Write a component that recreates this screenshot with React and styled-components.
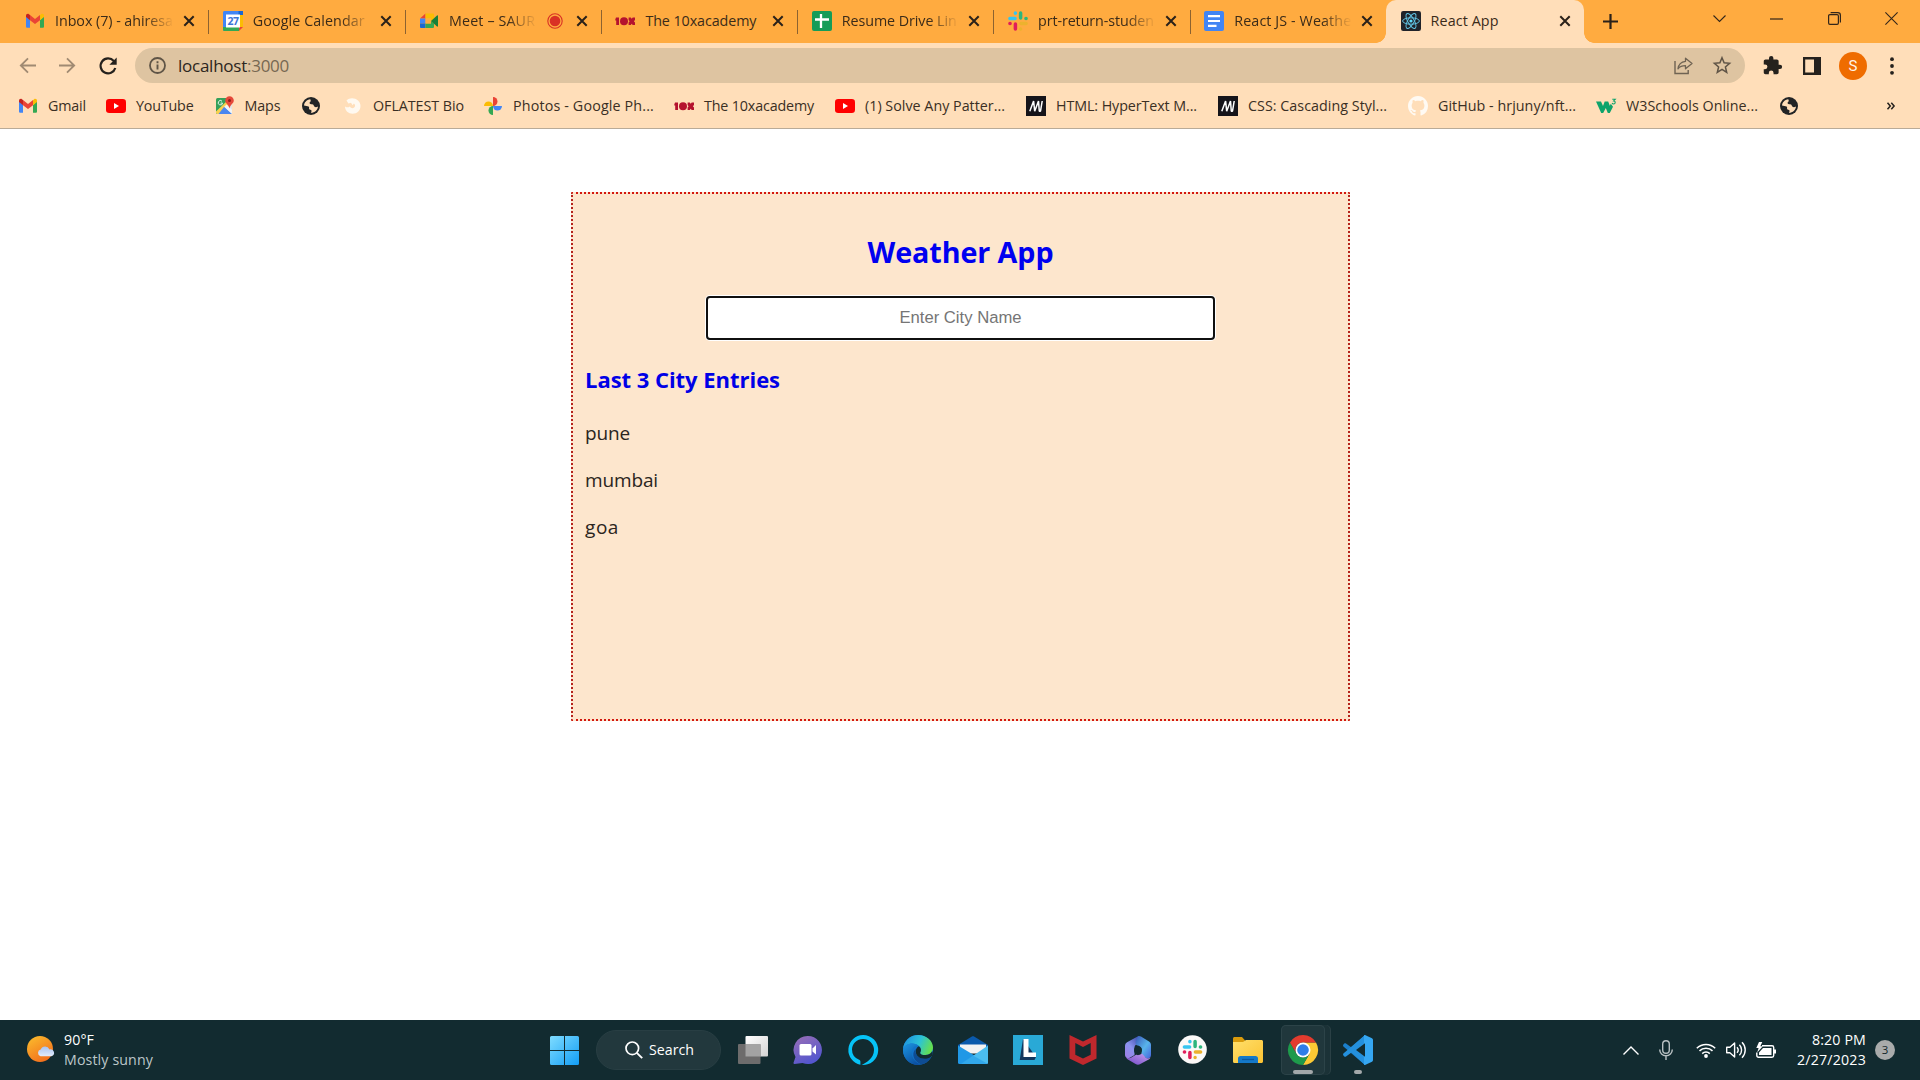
import React, { useLayoutEffect, useRef, useState } from "react";
import styled, { createGlobalStyle, css } from "styled-components";

const Global = createGlobalStyle`
  *, *::before, *::after { box-sizing: border-box; }
  html, body { margin: 0; padding: 0; }
  body { width: 1920px; height: 1080px; overflow: hidden; background: #fff; font-family: "Open Sans", "Noto Sans", sans-serif; }
  svg { display: block; flex: none; overflow: visible; }
  h1, h2, p { margin: 0; }
`;

/* ---------- text whose tracking adapts to a given run width ---------- */
const Run = styled.span`
  display: inline-block;
  white-space: nowrap;
  flex: none;
`;

function Fit({ w, children }) {
  const ref = useRef(null);
  const [spacing, setSpacing] = useState(0);
  useLayoutEffect(() => {
    const natural = ref.current.getBoundingClientRect().width;
    setSpacing((w - natural) / Math.max(1, children.length));
  }, [w, children]);
  return (
    <Run ref={ref} style={{ letterSpacing: spacing }}>
      {children}
    </Run>
  );
}

/* ---------- icons ---------- */
const Svg = ({ s = 20, h, box = "0 0 20 20", children, ...rest }) => (
  <svg width={s} height={h || s} viewBox={box} fill="none" {...rest}>
    {children}
  </svg>
);

const GmailIcon = () => (
  <Svg>
    <path d="M1 5.2v10.3c0 .8.6 1.3 1.3 1.3H5V9L1 5.2z" fill="#4285f4" />
    <path d="M15 9v7.8h2.7c.8 0 1.3-.6 1.3-1.3V5.2L15 9z" fill="#34a853" />
    <path d="M15 4.200V9.200l4-3.200V4.600c0-1.500-1.700-2.300-2.900-1.400L15 4.200z" fill="#fbbc04" />
    <path d="M5 9.200V4.100l5 3.900 5-3.900v5.100l-5 3.800-5-3.800z" fill="#ea4335" />
    <path d="M1 4.600V6l4 3.200V4.100L3.900 3.200C2.700 2.300 1 3.100 1 4.600z" fill="#c5221f" />
  </Svg>
);
const YouTubeIcon = () => (
  <Svg>
    <rect x="0" y="3" width="20" height="14" rx="3.2" fill="#f00" />
    <path d="M8 7.100v5.800l5-2.900-5-2.900z" fill="#fff" />
  </Svg>
);
const MapsIcon = () => (
  <Svg>
    <rect x="1" y="2" width="16" height="16" rx="1.5" fill="#34a05a" />
    <path d="M2 18 17 4v12.500c0 .8-.7 1.500-1.500 1.500z" fill="#dfe3e6" />
    <path d="M9 11l8 7H3l6-7z" fill="#4a86f0" />
    <path d="M1 15.500 14 3l2.500 2.500L4 18H2.500C1.700 18 1 17.300 1 16.500z" fill="#f9d04f" />
    <path d="M9.200 10.800 17 18H3.500l5.700-7.200z" fill="#4a86f0" />
    <path d="M9.200 10.800 11.500 8.600 17 13.800V18l-7.800-7.200z" fill="#f1f3f4" />
    <path d="M7 5.200a2.200 2.200 0 1 0 .6 1.900H5.600" stroke="#e8f5ec" strokeWidth="1" />
    <path d="M14.500.2a4.300 4.300 0 0 0-4.300 4.300c0 2.800 3.600 4.200 4.300 8 .7-3.800 4.300-5.200 4.300-8A4.300 4.300 0 0 0 14.500.2z" fill="#e5483a" />
    <circle cx="14.5" cy="4.5" r="1.5" fill="#8d1f17" />
  </Svg>
);
const GlobeIcon = () => (
  <Svg>
    <circle cx="10" cy="10" r="9" fill="#222426" />
    <path d="M9.200 3.200c-3.400.4-6 3.200-6.200 6.300 1.600.6 3.300.3 4.600 1.100 1.200.8-.2 2 .9 2.800 1.100.7 2.100.2 2 1.500 0 .8-.2 1.400-.5 2 3.800-.2 6.700-3 7-6.400-1.300.9-2.800.9-3.700.1-.8-.8-.2-1.800-1.300-2.200-1.300-.4-2.600.2-3.300-.8-.7-1.200.8-1.500 1-2.600.1-.7-.1-1.300-.5-1.800z" fill="#ffdeb9" />
  </Svg>
);
const FlareIcon = () => (
  <Svg>
    <path d="M3.500 4.500C6.500 1.600 11.700 1.700 15 4.600c3.300 3 3.300 8 .3 11-3 2.900-8.300 2.900-11.100.2C2.600 14 2.100 12.300 2 10.400c2 1.300 3.400 1.200 4.800.1 1.200 2 3.200 2 4.400 1 1.300-1.200 1.200-3-.3-4L9.600 9.200 8 6.800 5.400 7.400 3.500 4.500z" fill="#fff9f0" />
  </Svg>
);
const PhotosIcon = () => (
  <Svg>
    <path d="M10 10V1a4.500 4.500 0 0 1 0 9z" fill="#ea4335" />
    <path d="M10 10h9a4.500 4.500 0 0 1-9 0z" fill="#4285f4" />
    <path d="M10 10v9a4.500 4.500 0 0 1 0-9z" fill="#34a853" />
    <path d="M10 10H1a4.500 4.500 0 0 1 9 0z" fill="#fbbc04" />
  </Svg>
);
const TenXIcon = () => (
  <Svg>
    <path d="M.3 8.500 1 6.500h3V14H1.200V9.400H.3z" fill="#b5122e" />
    <circle cx="9" cy="10.200" r="4" fill="#b5122e" />
    <path d="M13.600 6.500h2.200l.9 1.200 1-1.200h2.300v2.400l-1.100 1.300 1.100 1.300V14h-2.300l-1-1.200-.9 1.200h-2.200v-2.500l1-1.300-1-1.300z" fill="#b5122e" />
  </Svg>
);
const MdnIcon = () => (
  <Svg>
    <rect width="20" height="20" fill="#15141a" />
    <path d="M3.800 15.200 7.600 5l1.100 10.200L12.500 5l.8 10.200h1.200L16.200 5" stroke="#fff" strokeWidth="1.5" strokeLinejoin="bevel" />
  </Svg>
);
const GitHubIcon = () => (
  <Svg s={20} box="0 0 16 16">
    <path fill="#fffaf3" d="M8 0C3.580 0 0 3.580 0 8c0 3.540 2.290 6.530 5.470 7.590.4.070.55-.17.55-.38 0-.19-.01-.82-.01-1.490-2.010.37-2.530-.49-2.690-.94-.09-.23-.48-.94-.82-1.130-.28-.15-.68-.52-.01-.53.630-.010 1.080.580 1.230.820.720 1.210 1.870.870 2.330.660.070-.520.280-.870.510-1.070-1.780-.200-3.640-.890-3.640-3.950 0-.870.310-1.590.820-2.150-.080-.200-.360-1.020.080-2.120 0 0 .670-.210 2.200.820.640-.180 1.320-.270 2-.270s1.360.090 2 .270c1.530-1.040 2.200-.820 2.200-.820.440 1.100.160 1.920.080 2.120.510.560.820 1.270.820 2.150 0 3.070-1.870 3.750-3.650 3.950.290.250.540.730.540 1.480 0 1.070-.010 1.930-.010 2.200 0 .210.150.460.550.380A8.010 8.010 0 0 0 16 8c0-4.420-3.580-8-8-8z" />
  </Svg>
);
const W3Icon = () => (
  <Svg>
    <path d="M0 5.500h5l2 4.500 1.700-4.500h3.500l1.600 4.200 1-2 2.200 3L13.800 17h-2l-2-5-2.600 5h-2z" fill="#0fa36b" />
    <path d="M16.300 3.200h3L17.700 5c2 0 2 3-.1 3-.9 0-1.300-.4-1.500-1" stroke="#0fa36b" strokeWidth="1.1" />
  </Svg>
);
const CalendarIcon = () => (
  <Svg>
    <path d="M0 1.500C0 .7.7 0 1.500 0H20v4H4v12L2.500 20H1.500A1.500 1.500 0 0 1 0 18.500z" fill="#4285f4" />
    <path d="M15.500 0H20v4h-4.500z" fill="#1967d2" />
    <path d="M16 4h4v12h-4z" fill="#fbbc04" />
    <path d="M0 16h16v4H1.500A1.500 1.500 0 0 1 0 18.500z" fill="#34a853" />
    <path d="M16 20v-4h4z" fill="#ea4335" />
    <rect x="3" y="3.5" width="14" height="13" fill="#fff" />
    <text x="10" y="14" textAnchor="middle" fontFamily="Open Sans, sans-serif" fontSize="10.5" fontWeight="700" letterSpacing="-.5" fill="#3b74d8">27</text>
  </Svg>
);
const MeetIcon = () => (
  <Svg>
    <path d="M1 7.500 6.500 2.500V7.500z" fill="#ea4335" />
    <path d="M6.500 2.500h7.200c.8 0 1.300.5 1.300 1.300V8l-3 2V7.500H6.500z" fill="#fbbc04" />
    <path d="M1 7.500h5.500v5H1z" fill="#4285f4" />
    <path d="M1 12.500h5.500V17H2.300C1.500 17 1 16.500 1 15.700z" fill="#1967d2" />
    <path d="M6.500 12.500H12V10l3 2.500v3.200c0 .8-.5 1.300-1.300 1.300H6.500z" fill="#34a853" />
    <path d="M6.500 7.500H12v5H6.500z" fill="#ffab40" />
    <path d="M12 10l6-5.500c.4-.3 1-.1 1 .5v10c0 .6-.6.8-1 .5z" fill="#188038" />
  </Svg>
);
const RecordIcon = () => (
  <Svg s={16} box="0 0 16 16">
    <circle cx="8" cy="8" r="7.2" stroke="#d93025" strokeWidth="1.1" />
    <circle cx="8" cy="8" r="5.3" fill="#d93025" />
  </Svg>
);
const SheetsIcon = () => (
  <Svg>
    <rect width="20" height="20" rx="2" fill="#159c58" />
    <path d="M9 3v14M3 8.500h14" stroke="#fff" strokeWidth="2.3" />
  </Svg>
);
const SlackMark = () => (
  <g>
    <path d="M1.900 7.400h5.200M7.400 2v.3" stroke="#36c5f0" strokeWidth="3.500" strokeLinecap="round" />
    <path d="M12.600 1.900v5.200M17.900 7.400h.2" stroke="#2eb67d" strokeWidth="3.500" strokeLinecap="round" />
    <path d="M12.900 12.600h5.200M12.600 17.900v.2" stroke="#ecb22e" strokeWidth="3.500" strokeLinecap="round" />
    <path d="M7.400 12.900v5.200M1.900 12.600h.2" stroke="#e01e5a" strokeWidth="3.500" strokeLinecap="round" />
  </g>
);
const SlackIcon = () => <Svg><SlackMark /></Svg>;
const DocsIcon = () => (
  <Svg>
    <rect width="20" height="20" rx="2" fill="#4285f4" />
    <path d="M4 5.200h12M4 10h12M4 14.800h8.500" stroke="#fff" strokeWidth="2.2" />
  </Svg>
);
const ReactIcon = () => (
  <Svg>
    <rect width="20" height="20" rx="2.2" fill="#20232a" />
    <g stroke="#61c5e6" strokeWidth=".95">
      <ellipse cx="10" cy="10" rx="8.4" ry="3.2" />
      <ellipse cx="10" cy="10" rx="8.4" ry="3.2" transform="rotate(60 10 10)" />
      <ellipse cx="10" cy="10" rx="8.4" ry="3.2" transform="rotate(120 10 10)" />
    </g>
    <circle cx="10" cy="10" r="1.6" fill="#61dafb" />
  </Svg>
);
const CloseIcon = () => (
  <Svg s={10} box="0 0 10 10">
    <path d="M.3.3l9.400 9.400M9.700.3.3 9.700" stroke="#2a2119" strokeWidth="2" />
  </Svg>
);

/* ---------- tab strip ---------- */
const Screen = styled.div`
  width: 1920px;
  height: 1080px;
  display: flex;
  flex-direction: column;
  background: #fff;
`;
const TabStrip = styled.header`
  height: 43px;
  display: flex;
  background: #ffab40;
  padding-left: 10.5px;
`;
const Tab = styled.div`
  width: ${(p) => p.$w || 196.3}px;
  height: 43px;
  flex: none;
  display: flex;
  align-items: center;
  padding: 0 14px 1px 14.5px;
  font-size: 14.3px;
  line-height: 20px;
  color: #3b2b19;
  ${(p) =>
    p.$divided &&
    css`
      background: linear-gradient(#8c6230, #8c6230) left 0 top 10px / 1px 24px no-repeat;
    `}
  ${(p) =>
    p.$active &&
    css`
      background: #ffdeb9;
      border-radius: 10px 10px 0 0;
    `}
`;
const TabTitle = styled.div`
  flex: 1;
  min-width: 0;
  margin: 0 10px;
  overflow: hidden;
  height: 20px;
  position: relative;
  top: -0.5px;
  ${(p) =>
    p.$fade &&
    css`
      mask-image: linear-gradient(90deg, #000 calc(100% - 30px), transparent);
    `}
`;
const TabEnd = styled.div`
  display: flex;
  align-items: center;
  gap: 14px;
`;
const Flare = styled.span`
  width: 10px;
  height: 10px;
  flex: none;
  align-self: flex-end;
  margin-left: ${(p) => (p.$side === "left" ? "-10px" : "0")};
  background: radial-gradient(
    circle at ${(p) => (p.$side === "left" ? "0 0" : "100% 0")},
    transparent 9.5px,
    #ffdeb9 10px
  );
`;
const NewTab = styled.div`
  display: flex;
  align-items: center;
  margin-left: 9px;
  padding-bottom: 1px;
`;
const WindowControls = styled.div`
  display: flex;
  margin-left: auto;
  height: 37px;
  align-items: center;
`;
const Control = styled.div`
  width: 57.3px;
  display: flex;
  justify-content: center;
`;

const tabs = [
  { icon: <GmailIcon />, title: "Inbox (7) - ahiresa", w: 118, fade: true, width: 197.8 },
  { icon: <CalendarIcon />, title: "Google Calendar", w: 112, fade: true },
  { icon: <MeetIcon />, title: "Meet – SAUR", w: 86, fade: true, rec: true },
  { icon: <TenXIcon />, title: "The 10xacademy", w: 111 },
  { icon: <SheetsIcon />, title: "Resume Drive Lin", w: 115, fade: true },
  { icon: <SlackIcon />, title: "prt-return-studen", w: 116, fade: true },
  { icon: <DocsIcon />, title: "React JS - Weathe", w: 117, fade: true },
  { icon: <ReactIcon />, title: "React App", w: 68, active: true, width: 198 },
];

/* ---------- toolbar ---------- */
const Toolbar = styled.div`
  height: 45px;
  display: flex;
  align-items: center;
  background: #ffdeb9;
  padding-left: 19px;
`;
const NavButtons = styled.div`
  width: 116px;
  flex: none;
  display: flex;
  align-items: center;
  gap: 23px;
`;
const Omnibox = styled.div`
  width: 1610px;
  flex: none;
  height: 35px;
  border-radius: 18px;
  background: #dec4a1;
  display: flex;
  align-items: center;
  padding: 0 14px;
  font-size: 17px;
  line-height: 24px;
  color: #2c2620;
`;
const Url = styled.div`
  margin-left: 12px;
  display: flex;
`;
const Port = styled.span`
  color: #776852;
`;
const OmniActions = styled.div`
  display: flex;
  gap: 20px;
  margin-left: auto;
`;
const ToolActions = styled.div`
  margin-left: 17px;
  display: flex;
  align-items: center;
`;
const Slot = styled.div`
  width: ${(p) => p.$w || 40}px;
  display: flex;
  justify-content: ${(p) => (p.$end ? "flex-end" : "center")};
  flex: none;
`;
const Avatar = styled.div`
  width: 28px;
  height: 28px;
  flex: none;
  border-radius: 50%;
  background: #ef6c00;
  color: #fff4e6;
  font: 15px/28px Roboto, sans-serif;
  text-align: center;
`;

/* ---------- bookmarks ---------- */
const Bookmarks = styled.nav`
  height: 41px;
  display: flex;
  padding: 0 0 5px 18px;
  align-items: center;
  background: #ffdeb9;
  border-bottom: 1px solid #b9ab98;
`;
const Bookmark = styled.div`
  width: ${(p) => p.$w}px;
  flex: none;
  display: flex;
  align-items: center;
  gap: 10px;
  font-size: 14.3px;
  line-height: 20px;
  color: #3a2f24;
`;
const Overflow = styled.div`
  margin-left: auto;
  padding-right: 25px;
`;

const bookmarks = [
  { icon: <GmailIcon />, text: "Gmail", w: 38, step: 88 },
  { icon: <YouTubeIcon />, text: "YouTube", w: 57.5, step: 108.5 },
  { icon: <MapsIcon />, text: "Maps", w: 36, step: 86.5 },
  { icon: <GlobeIcon />, step: 42 },
  { icon: <FlareIcon />, text: "OFLATEST Bio", w: 91, step: 140 },
  { icon: <PhotosIcon />, text: "Photos - Google Ph...", w: 141, step: 191 },
  { icon: <TenXIcon />, text: "The 10xacademy", w: 110, step: 161 },
  { icon: <YouTubeIcon />, text: "(1) Solve Any Patter...", w: 140, step: 191 },
  { icon: <MdnIcon />, text: "HTML: HyperText M...", w: 141, step: 192 },
  { icon: <MdnIcon />, text: "CSS: Cascading Styl...", w: 139, step: 190 },
  { icon: <GitHubIcon />, text: "GitHub - hrjuny/nft...", w: 138, step: 188 },
  { icon: <W3Icon />, text: "W3Schools Online...", w: 132, step: 183 },
  { icon: <GlobeIcon />, step: 30 },
];

/* ---------- weather page ---------- */
const Page = styled.main`
  flex: 1;
  min-height: 0;
  padding: 63px 0 0 571px;
  background: #fff;
`;
const Card = styled.section`
  width: 779px;
  height: 529px;
  border: 2px dotted;
  border-color: #d3180f #b5231b;
  background: #fde6cd;
  display: flex;
  flex-direction: column;
  padding: 38px 12px 0;
`;
const Title = styled.h1`
  font-size: 28.7px;
  line-height: 40px;
  font-weight: 700;
  color: #0000f0;
  text-align: center;
`;
const CityInput = styled.input`
  align-self: center;
  width: 509px;
  height: 44px;
  margin: 24px 0 23px;
  border: 2px solid #101010;
  border-radius: 4px;
  outline: none;
  box-shadow: 0 0 0 1px #fff;
  background: #fff;
  text-align: center;
  font: 16.67px "Liberation Sans", Arial, sans-serif;
  &::placeholder {
    color: #757575;
    opacity: 1;
  }
`;
const Subtitle = styled.h2`
  font-size: 22px;
  line-height: 32px;
  font-weight: 700;
  color: #0000e6;
  margin-bottom: 25px;
`;
const City = styled.p`
  font-size: 19px;
  line-height: 27px;
  color: #2b2520;
  margin-bottom: 20px;
`;

/* ---------- taskbar ---------- */
const Taskbar = styled.footer`
  height: 60px;
  flex: none;
  display: flex;
  align-items: center;
  background: #122b30;
  color: #fff;
  font-size: 14.2px;
  line-height: 20px;
`;
const Weather = styled.div`
  width: 537px;
  padding-left: 27px;
  display: flex;
  align-items: center;
  gap: 9px;
`;
const Stack = styled.div`
  display: flex;
  flex-direction: column;
  align-items: ${(p) => (p.$end ? "flex-end" : "flex-start")};
`;
const Muted = styled.span`
  color: #bcc7c9;
`;
const SearchPill = styled.div`
  width: 125px;
  height: 40px;
  margin: 0 4px;
  border-radius: 20px;
  background: #22383d;
  border: 1px solid #283e43;
  display: flex;
  align-items: center;
  justify-content: center;
  gap: 6px;
  padding-left: 2px;
`;
const AppSlot = styled.div`
  width: 55px;
  height: 50px;
  flex: none;
  display: grid;
  place-items: center;
`;
const AppTile = styled.div`
  width: 44px;
  height: 50px;
  display: flex;
  flex-direction: column;
  align-items: center;
  padding-top: 10px;
  gap: 5px;
  border-radius: 5px;
  ${(p) =>
    p.$open &&
    css`
      background: #20373c;
      box-shadow: inset 0 0 0 1px #2c4348, 5px 0 0 0 #1b3237, 6px 0 0 0 #2a4045;
    `}
`;
const Indicator = styled.div`
  width: ${(p) => p.$w}px;
  height: 4px;
  border-radius: 2px;
  background: #a3a8aa;
`;
const Tray = styled.div`
  margin-left: auto;
  display: flex;
  align-items: center;
  padding-right: 25px;
`;
const Badge = styled.div`
  width: 20px;
  height: 20px;
  border-radius: 50%;
  background: #a9abab;
  color: #14282c;
  font-size: 11.5px;
  line-height: 20px;
  text-align: center;
  margin-left: 9px;
`;

const SunIcon = () => (
  <Svg s={28} box="0 0 28 28">
    <defs>
      <linearGradient id="sun" x1="0" y1="0" x2=".6" y2="1"><stop stopColor="#fbc02d" /><stop offset="1" stopColor="#f2701d" /></linearGradient>
      <linearGradient id="cloud" x1="0" y1="0" x2="0" y2="1"><stop stopColor="#a9c4f2" /><stop offset="1" stopColor="#e3ebfa" /></linearGradient>
    </defs>
    <circle cx="13" cy="13" r="13" fill="url(#sun)" />
    <path d="M13.500 20.200a3.400 3.400 0 0 1 .2-6.600 4.800 4.800 0 0 1 8.800-.2A3.500 3.500 0 0 1 24.500 20.200z" fill="url(#cloud)" />
  </Svg>
);
const StartIcon = () => (
  <Svg s={29} box="0 0 29 29">
    <defs><linearGradient id="win" x1="0" y1="0" x2="1" y2="1"><stop stopColor="#7fdcff" /><stop offset="1" stopColor="#129df5" /></linearGradient></defs>
    <path d="M1.500 0H14v14H0V1.500A1.500 1.500 0 0 1 1.500 0zM15 0h12.500A1.500 1.500 0 0 1 29 1.500V14H15zM0 15h14v14H1.500A1.500 1.500 0 0 1 0 27.500zM15 15h14v12.500a1.500 1.500 0 0 1-1.500 1.500H15z" fill="url(#win)" />
  </Svg>
);
const TaskViewIcon = () => (
  <Svg s={30} box="0 0 30 30">
    <defs><linearGradient id="tv" x1="0" y1="0" x2="1" y2="1"><stop stopColor="#fff" /><stop offset="1" stopColor="#d3d3d3" /></linearGradient></defs>
    <rect x="7.5" y="1" width="22.5" height="20.5" rx="1" fill="url(#tv)" />
    <rect x="0" y="9" width="22.5" height="20" rx="1" fill="#6d6c6c" />
    <path d="M7.500 9h15v12.500h-15z" fill="#a3a3a3" />
  </Svg>
);
const TeamsIcon = () => (
  <Svg s={30} box="0 0 30 30">
    <defs><linearGradient id="tm" x1="0" y1="0" x2=".5" y2="1"><stop stopColor="#9a6fb4" /><stop offset="1" stopColor="#5456cf" /></linearGradient></defs>
    <path d="M15 1a14 14 0 1 1-5.500 26.900L1.600 29c-.9.1-1.400-.6-1-1.400L2.500 22A14 14 0 0 1 15 1z" fill="url(#tm)" />
    <rect x="6.5" y="9" width="12" height="11.5" rx="1.5" fill="#fff" />
    <path d="m19.500 13.500 3.500-3.500v9.500l-3.500-3z" fill="#fff" />
  </Svg>
);
const AlexaIcon = () => (
  <Svg s={30} box="0 0 30 30">
    <path d="M15 0a15 15 0 0 0-2.600 29.700v-3.100c0-.9-.5-1.500-1.300-1.900A11 11 0 0 1 4 14.300C4.200 8.600 9 4 15 4a11 11 0 0 1 11 11c0 8.500-8.500 13.300-12.500 14.900A15 15 0 1 0 15 0z" fill="#06c3f7" />
  </Svg>
);
const EdgeIcon = () => (
  <Svg s={30} box="0 0 24 24">
    <defs>
      <linearGradient id="e1" x1="0" y1=".2" x2="1" y2=".5"><stop stopColor="#1d8fe0" /><stop offset=".55" stopColor="#2cc3d6" /><stop offset="1" stopColor="#66e04c" /></linearGradient>
      <linearGradient id="e2" x1="0" y1="0" x2=".6" y2="1"><stop stopColor="#1c96e2" /><stop offset="1" stopColor="#0b4fa0" /></linearGradient>
    </defs>
    <circle cx="12" cy="12" r="12" fill="#1173c9" />
    <path d="M0 11.500C.5 4.800 5.700 0 12.200 0 18.700 0 24 4.600 24 10c0 3.600-2.600 6-6 6-2.700 0-4.700-.9-4.200-2.100.9-1.400.8-3.300-.8-4.900C9 5.300 2 6.500 0 11.500z" fill="url(#e1)" />
    <path d="M0 11.500C1.800 6.300 9 5.500 12.500 8.600 9 8 6.700 11 7 14.500c.4 4.500 3.600 8.100 8 9.100A12 12 0 0 1 0 11.500z" fill="url(#e2)" />
    <path d="M10.200 11.200c-1.500 5 3.700 9 9.500 7.100.9-.3 1.900-.8 2.600-.6C20.700 21 17.500 23 14.800 23.600 8.500 21.500 6.300 14.800 10.200 11.200z" fill="#0e4c93" />
    <path d="M12.700 9c2 1.500 2 3.800 1.100 4.900-.5 1.200 1.500 2.100 4.200 2.100 2.400 0 4.400-1.200 5.300-3 1 1.800.4 3.300-.9 4.600-5 3-12.200 1-12.200-4.600 0-1.700 1-3.300 2.500-4z" fill="#122b30" />
  </Svg>
);
const MailIcon = () => (
  <Svg s={30} box="0 0 30 30">
    <path d="M0 10 13.500 1.700c1-.6 2-.6 3 0L30 10v4H0z" fill="#0a59ab" />
    <path d="M2 9.500h26v9H2z" fill="#f2f2f2" />
    <path d="M0 10.500 19 22l11 7H1.500A1.500 1.500 0 0 1 0 27.500z" fill="#2098e6" />
    <path d="M30 10.500 3 29h25.500a1.500 1.500 0 0 0 1.500-1.500z" fill="#4bbdf0" />
    <path d="M15 20.500 30 29H1z" fill="#259ce8" opacity=".65" />
  </Svg>
);
const LenovoIcon = () => (
  <Svg s={30} box="0 0 30 30">
    <rect width="30" height="30" fill="#29a9d6" />
    <path d="m10 4-3.300 21h14.800l1.500-3z" fill="#12375e" />
    <path d="M10.500 4h5v13.500H23V22H10.500z" fill="#fff" />
  </Svg>
);
const McAfeeIcon = () => (
  <Svg s={30} box="0 0 30 30">
    <path d="M1.500 0 15 6.500 28.500 0v23.500L15 30 1.500 23.500zM7.300 8v11.700L15 23.500l7.700-3.800V8L15 12z" fill="#c0282d" fillRule="evenodd" />
  </Svg>
);
const OfficeIcon = () => (
  <Svg s={30} box="0 0 30 30">
    <defs>
      <linearGradient id="o1" x1="0" y1="1" x2=".8" y2="0"><stop stopColor="#9f7ce6" /><stop offset=".5" stopColor="#8a93ee" /><stop offset="1" stopColor="#3f4fae" /></linearGradient>
      <linearGradient id="o2" x1="0" y1="0" x2="1" y2="1"><stop stopColor="#3a57ba" /><stop offset=".55" stopColor="#58b4ea" /><stop offset="1" stopColor="#4763dd" /></linearGradient>
      <linearGradient id="o3" x1="0" y1="1" x2="1" y2="0"><stop stopColor="#7147c4" /><stop offset="1" stopColor="#c7a0f2" /></linearGradient>
    </defs>
    <path d="M15.500 1 4.500 7C3 7.800 2 9 2 11v9c0 2.500 2.600 4 4.800 2.800L11.500 20v-7.500c0-1.200.5-2.200 1.500-2.800L17 7z" fill="url(#o1)" />
    <path d="M15.500 1c1-.1 1.800.2 2.500.6L26 6.500c1.400.9 2 2.100 2 3.500v10c0 2.800-2.700 4.200-5 3l-4.500-3v-5.500c0-1-.5-1.700-1.300-2.200L13 9.800C12 7 13 3 15.500 1z" fill="url(#o2)" />
    <path d="M3 22c2 1.800 4 1.200 5.300.4L13 19.700c1.200-.7 2.700-.6 3.800 0l2.200-1.200 4 4.500c1.500.8 3.300.6 4.500-.6-.4.9-1 1.500-1.800 2l-8.400 4.700c-1.500.9-3.200.9-4.700 0L4.900 24.500C4 23.900 3.300 23 3 22z" fill="url(#o3)" />
    <path d="M15 10.500c2.500.8 4 2.300 4 4.500s-1.500 4-4 5.200c-2.500-.7-4-2.700-4-5s1.500-4 4-4.700z" fill="#122b30" />
  </Svg>
);
const SlackAppIcon = () => (
  <Svg s={29} box="0 0 29 29">
    <circle cx="14.5" cy="14.5" r="14.3" fill="#fbf9f8" />
    <g transform="translate(4.500 4.500)"><SlackMark /></g>
  </Svg>
);
const FolderIcon = () => (
  <Svg s={30} box="0 0 30 30">
    <defs><linearGradient id="fo" x1="0" y1="0" x2="1" y2="1"><stop stopColor="#ffdf6b" /><stop offset="1" stopColor="#fbc332" /></linearGradient></defs>
    <path d="M0 3.500C0 2.700.7 2 1.500 2H9l3.500 4V9H0z" fill="#d99b0c" />
    <path d="M0 7h10l3-2h15.500c.8 0 1.500.7 1.500 1.500v20c0 .8-.7 1.500-1.500 1.500h-27A1.500 1.500 0 0 1 0 26.500z" fill="url(#fo)" />
    <path d="M5 28v-4.500c0-1.400 1-2.500 2.500-2.500h15c1.500 0 2.500 1.100 2.500 2.500V28z" fill="#1479c9" />
    <path d="M9 24.500h12" stroke="#0b58a0" strokeWidth="1.3" />
  </Svg>
);
const ChromeIcon = () => (
  <Svg s={30} box="0 0 48 48">
    <path d="M24 12h20.800A24 24 0 0 1 24 48l10.400-18z" fill="#fcc934" />
    <path d="M3.200 12A24 24 0 0 0 24 48l10.400-18A12 12 0 0 1 13.600 30z" fill="#1e9a4b" />
    <path d="M24 12h20.800A24 24 0 0 0 3.200 12l10.400 18A12 12 0 0 1 24 12z" fill="#e33b2e" />
    <circle cx="24" cy="24" r="12" fill="#fff" />
    <circle cx="24" cy="24" r="9.3" fill="#2f7de9" />
  </Svg>
);
const CodeIcon = () => (
  <Svg s={30} box="0 0 30 30">
    <path d="M22 0 8.500 12.500 3 8.500c-.6-.4-1.200-.3-1.700.1L.4 9.600c-.5.600-.5 1.300 0 1.800L22 30z" fill="#1b7fcb" />
    <path d="M22 30 8.500 17.500 3 21.500c-.6.4-1.200.3-1.700-.1L.4 20.400c-.5-.6-.5-1.300 0-1.800L22 0z" fill="#2490dd" />
    <path d="M22 0l7 3.300c.6.3 1 .9 1 1.600v20.200c0 .7-.4 1.300-1 1.600L22 30c-.8 0-1-.5-1-1V1c0-.5.2-1 1-1z" fill="#35a7f2" />
    <path d="M22 8.300v13.400L13 15z" fill="#122b30" />
  </Svg>
);

const apps = [
  { icon: <TaskViewIcon /> },
  { icon: <TeamsIcon /> },
  { icon: <AlexaIcon /> },
  { icon: <EdgeIcon /> },
  { icon: <MailIcon /> },
  { icon: <LenovoIcon /> },
  { icon: <McAfeeIcon /> },
  { icon: <OfficeIcon /> },
  { icon: <SlackAppIcon /> },
  { icon: <FolderIcon /> },
  { icon: <ChromeIcon />, open: true, mark: 20 },
  { icon: <CodeIcon />, mark: 8 },
];

export default function App() {
  return (
    <Screen>
      <Global />
      <TabStrip>
        {tabs.map((t, i) => (
          <React.Fragment key={t.title}>
            {t.active && <Flare $side="left" />}
            <Tab $active={t.active} $w={t.width} $divided={i > 0 && i < 7}>
              {t.icon}
              <TabTitle $fade={t.fade}>
                <Fit w={t.w}>{t.title}</Fit>
              </TabTitle>
              <TabEnd>
                {t.rec && <RecordIcon />}
                <CloseIcon />
              </TabEnd>
            </Tab>
            {t.active && <Flare $side="right" />}
          </React.Fragment>
        ))}
        <NewTab>
          <Svg s={15} box="0 0 15 15"><path d="M7.500 0v15M0 7.500h15" stroke="#2a2119" strokeWidth="2.2" /></Svg>
        </NewTab>
        <WindowControls>
          <Control><Svg s={13} h={8} box="0 0 13 8"><path d="m.5.5 6 6 6-6" stroke="#33261a" strokeWidth="1.1" /></Svg></Control>
          <Control><Svg s={13} h={2} box="0 0 13 2"><path d="M0 1h13" stroke="#33261a" strokeWidth="1.2" /></Svg></Control>
          <Control>
            <Svg s={13} box="0 0 13 13">
              <rect x=".6" y="2.6" width="9.8" height="9.8" rx="1.3" stroke="#33261a" strokeWidth="1.2" />
              <path d="M2.600.6h7.200c1.500 0 2.600 1.100 2.600 2.600v7.200" stroke="#33261a" strokeWidth="1.2" />
            </Svg>
          </Control>
          <Control><Svg s={13} box="0 0 13 13"><path d="m.4.4 12.200 12.200M12.600.4.4 12.600" stroke="#33261a" strokeWidth="1.1" /></Svg></Control>
        </WindowControls>
      </TabStrip>

      <Toolbar>
        <NavButtons>
          <Svg s={17} box="0 0 17 17"><path d="M17 8.500H2M9 1.300 1.800 8.500 9 15.700" stroke="#a08a72" strokeWidth="1.8" /></Svg>
          <Svg s={17} box="0 0 17 17"><path d="M0 8.500h15M8 1.300l7.200 7.200L8 15.700" stroke="#a08a72" strokeWidth="1.8" /></Svg>
          <Svg s={18} box="0 0 18 18">
            <path d="M14.800 4A7.500 7.500 0 1 0 16.300 11" stroke="#25211d" strokeWidth="2.2" />
            <path d="M17.700.5v7.300h-7.300z" fill="#25211d" />
          </Svg>
        </NavButtons>
        <Omnibox>
          <Svg s={17} box="0 0 17 17">
            <circle cx="8.5" cy="8.5" r="7.5" stroke="#5f5446" strokeWidth="1.8" />
            <path d="M8.500 7.500v5M8.500 4.300v1.900" stroke="#5f5446" strokeWidth="1.9" />
          </Svg>
          <Url>
            <Fit w={69}>localhost</Fit>
            <Port><Fit w={42}>:3000</Fit></Port>
          </Url>
          <OmniActions>
            <Svg s={19} box="0 0 19 19">
              <path d="M1 5v12.500h13.200V14" stroke="#6f6353" strokeWidth="1.4" />
              <path d="M11.500 2.200 18 7.500l-6.500 5.300V9.700c-3.600 0-5.700.8-7.500 3.100.5-4.300 3-7 7.500-7.500z" stroke="#6f6353" strokeWidth="1.3" strokeLinejoin="round" />
            </Svg>
            <Svg s={18} box="0 0 18 18"><path d="m9 1.800 2.100 5 5.500.5-4.200 3.600 1.300 5.400L9 13.400l-4.700 2.900 1.300-5.400-4.200-3.600 5.500-.5z" stroke="#5f5446" strokeWidth="1.5" /></Svg>
          </OmniActions>
        </Omnibox>
        <ToolActions>
          <Slot $w={20}>
            <Svg s={21} box="0 0 24 24"><path fill="#25211d" d="M20.500 11H19V7c0-1.100-.9-2-2-2h-4V3.500a2.500 2.500 0 0 0-5 0V5H4c-1.100 0-2 .9-2 2v3.800h1.500a2.700 2.700 0 0 1 0 5.400H2V20c0 1.100.9 2 2 2h3.800v-1.500a2.700 2.700 0 0 1 5.400 0V22H17c1.100 0 2-.9 2-2v-4h1.500a2.500 2.500 0 0 0 0-5z" /></Svg>
          </Slot>
          <Slot $w={60}>
            <Svg s={18} box="0 0 18 18"><path d="M0 0h18v18H0zM2.200 2.600v12.800h8.800V2.600z" fill="#25211d" fillRule="evenodd" /></Svg>
          </Slot>
          <Slot $w={22}><Avatar>S</Avatar></Slot>
          <Slot $w={56}>
            <Svg s={4} h={18} box="0 0 4 18"><circle cx="2" cy="2.2" r="1.9" fill="#25211d" /><circle cx="2" cy="9" r="1.9" fill="#25211d" /><circle cx="2" cy="15.8" r="1.9" fill="#25211d" /></Svg>
          </Slot>
        </ToolActions>
      </Toolbar>

      <Bookmarks>
        {bookmarks.map((b, i) => (
          <Bookmark key={i} $w={b.step}>
            {b.icon}
            {b.text && <Fit w={b.w}>{b.text}</Fit>}
          </Bookmark>
        ))}
        <Overflow>
          <Svg s={8} box="0 0 8 8"><path d="m.5.700 2.800 3.300-2.800 3.300M4.300.700 7.100 4 4.300 7.300" stroke="#25211d" strokeWidth="1.5" /></Svg>
        </Overflow>
      </Bookmarks>

      <Page>
        <Card>
          <Title><Fit w={186}>Weather App</Fit></Title>
          <CityInput placeholder="Enter City Name" />
          <Subtitle><Fit w={195}>Last 3 City Entries</Fit></Subtitle>
          <City><Fit w={45}>pune</Fit></City>
          <City><Fit w={73}>mumbai</Fit></City>
          <City><Fit w={34}>goa</Fit></City>
        </Card>
      </Page>

      <Taskbar>
        <Weather>
          <SunIcon />
          <Stack>
            <Fit w={30}>90°F</Fit>
            <Muted><Fit w={89}>Mostly sunny</Fit></Muted>
          </Stack>
        </Weather>
        <AppSlot><StartIcon /></AppSlot>
        <SearchPill>
          <Svg s={18} box="0 0 18 18"><circle cx="7.3" cy="7.3" r="6.3" stroke="#fff" strokeWidth="1.7" /><path d="m11.800 11.800 5.400 5.400" stroke="#fff" strokeWidth="1.9" /></Svg>
          <Fit w={45}>Search</Fit>
        </SearchPill>
        {apps.map((a, i) => (
          <AppSlot key={i}>
            <AppTile $open={a.open}>
              {a.icon}
              {a.mark && <Indicator $w={a.mark} />}
            </AppTile>
          </AppSlot>
        ))}
        <Tray>
          <Slot $w={34}><Svg s={16} h={9} box="0 0 16 9"><path d="m.5 8.500 7.500-7.500 7.500 7.500" stroke="#fff" strokeWidth="1.4" /></Svg></Slot>
          <Slot $w={36}>
            <Svg s={14} h={20} box="0 0 14 20">
              <rect x="3.7" y=".7" width="6.6" height="12.5" rx="3.3" stroke="#b9c1c3" strokeWidth="1.4" />
              <path d="M.7 9.500a6.300 6.300 0 0 0 12.600 0M7 16v4" stroke="#b9c1c3" strokeWidth="1.4" />
            </Svg>
          </Slot>
          <Slot $w={44}>
            <Svg s={20} h={16} box="0 0 20 16">
              <path d="M.8 6.200a13 13 0 0 1 18.400 0M3.500 8.900a9.200 9.200 0 0 1 13 0M6.200 11.600a5.400 5.400 0 0 1 7.600 0" stroke="#fff" strokeWidth="1.5" />
              <circle cx="10" cy="14" r="1.9" fill="#fff" />
            </Svg>
          </Slot>
          <Slot $w={16}>
            <Svg s={20} h={18} box="0 0 20 18">
              <path d="M.7 6.200h3.200L8.600 2v14l-4.700-4.200H.7z" stroke="#fff" strokeWidth="1.4" strokeLinejoin="round" />
              <path d="M11 6.200c1.400 1.600 1.400 4 0 5.600M13.400 3.700c2.900 3 2.900 7.600 0 10.600M16 1.200c4.300 4.400 4.300 11.200 0 15.600" stroke="#fff" strokeWidth="1.4" />
            </Svg>
          </Slot>
          <Slot $w={44}>
            <Svg s={20} h={17} box="0 0 20 17">
              <path d="M6 3.700h10c1 0 1.700.7 1.700 1.700v8.200c0 1-.7 1.700-1.700 1.700H2.500c-1 0-1.700-.7-1.700-1.700V10.500" stroke="#fff" strokeWidth="1.4" />
              <path d="M7 6h8.500v7H3v-2.500L7 6zM18 7.500h2v4h-2z" fill="#fff" />
              <path d="M3 0 .3 6h2.300L1.200 10.500 6.800 4.200H4.300L6.300 0z" fill="#fff" />
            </Svg>
          </Slot>
          <Slot $w={78} $end>
            <Stack $end>
              <Fit w={54}>8:20 PM</Fit>
              <Fit w={69}>2/27/2023</Fit>
            </Stack>
          </Slot>
          <Badge>3</Badge>
        </Tray>
      </Taskbar>
    </Screen>
  );
}
